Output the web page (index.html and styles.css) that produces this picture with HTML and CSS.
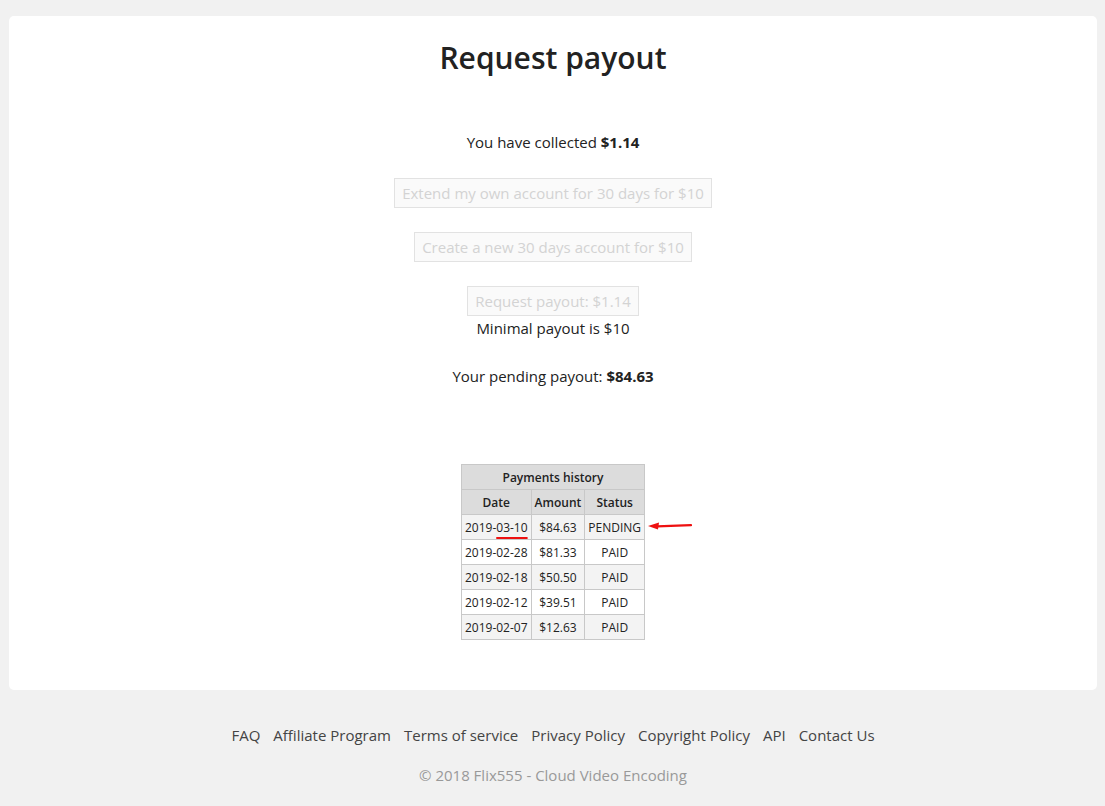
FILE: index.html
```html
<!DOCTYPE html>
<html>
<head>
    <meta name="viewport" content="width=device-width, initial-scale=1">
    <title>Request payout</title>
    <link rel="stylesheet" href="styles.css">
</head>
<body>
    <div class="payout-container">
        <h1>Request payout</h1>

        <p class="collected">You have collected <b>$1.14</b></p>

        <div class="actions">
            <button class="action-btn" disabled>Extend my own account for 30 days for $10</button>
            <button class="action-btn" disabled>Create a new 30 days account for $10</button>
            <div class="payout-box">
                <button class="action-btn" disabled>Request payout: $1.14</button>
                <div class="payout-note">Minimal payout is $10</div>
            </div>
        </div>

        <p class="pending">Your pending payout: <b>$84.63</b></p>

        <div class="history-wrap">
            <table class="history">
                <thead>
                    <tr><th colspan="3">Payments history</th></tr>
                    <tr><th>Date</th><th>Amount</th><th>Status</th></tr>
                </thead>
                <tbody>
                    <tr class="current">
                        <td><span class="date-mark">2019-<u>03-10</u></span></td>
                        <td>$84.63</td>
                        <td class="status">PENDING
                            <svg class="arrow" width="46" height="10" viewBox="0 0 46 10">
                                <path d="M44 4.2 L10 5.4" stroke="#e11" stroke-width="2.2" stroke-linecap="round"/>
                                <path d="M1 5 L12 1.5 L11 8.5 Z" fill="#e11"/>
                            </svg>
                        </td>
                    </tr>
                    <tr><td>2019-02-28</td><td>$81.33</td><td class="status">PAID</td></tr>
                    <tr><td>2019-02-18</td><td>$50.50</td><td class="status">PAID</td></tr>
                    <tr><td>2019-02-12</td><td>$39.51</td><td class="status">PAID</td></tr>
                    <tr><td>2019-02-07</td><td>$12.63</td><td class="status">PAID</td></tr>
                </tbody>
            </table>
        </div>
    </div>

    <footer class="site-footer">
        <nav class="footer-links">
            <a href="#">FAQ</a>
            <a href="#">Affiliate Program</a>
            <a href="#">Terms of service</a>
            <a href="#">Privacy Policy</a>
            <a href="#">Copyright Policy</a>
            <a href="#">API</a>
            <a href="#">Contact Us</a>
        </nav>
        <div class="copyright">&copy; 2018 Flix555 - Cloud Video Encoding</div>
    </footer>
</body>
</html>
```

FILE: styles.css
```css
body {
    margin: 0;
    padding: 16px 8px 0 9px;
    background-color: #f1f1f1;
    font-family: "Open Sans", "Noto Sans", sans-serif;
    font-size: 15px;
    color: #222;
}

.payout-container {
    background: #fff;
    border-radius: 5px;
    height: 674px;
    box-sizing: border-box;
    padding-top: 22px;
    text-align: center;
}

h1 {
    margin: 0;
    font-size: 30px;
    font-weight: 600;
    line-height: 40px;
    color: #222;
}

.collected {
    margin: 52px 0 0;
    line-height: 24px;
}

.actions {
    display: flex;
    flex-direction: column;
    align-items: center;
    gap: 24px;
    margin-top: 24px;
}

.action-btn {
    font-family: inherit;
    font-size: 15px;
    height: 30px;
    padding: 0 7px;
    background: #fafafa;
    border: 1px solid #e2e2e2;
    color: #d3d3d3;
}

.payout-box {
    display: flex;
    flex-direction: column;
    align-items: center;
}

.payout-note {
    line-height: 24px;
}

.pending {
    margin: 24px 0 0;
    line-height: 24px;
}

.history-wrap {
    margin-top: 76px;
    display: flex;
    justify-content: center;
}

.history {
    border-collapse: collapse;
    font-size: 12px;
    color: #222;
}

.history th {
    background: #dcdcdc;
    border: 1px solid #c8c8c8;
    height: 24px;
    padding: 0 3px;
    font-weight: 600;
}

.history td {
    border: 1px solid #c8c8c8;
    height: 24px;
    padding: 0 3px;
}

.history tbody tr:nth-child(odd) {
    background: #f3f3f3;
}

.history td.status {
    position: relative;
}

.date-mark u {
    text-decoration-color: #e11;
    text-decoration-thickness: 2px;
    text-underline-offset: 5px;
}

.arrow {
    position: absolute;
    left: 62px;
    top: 6px;
}

.site-footer {
    text-align: center;
    padding-top: 34px;
}

.footer-links {
    display: flex;
    justify-content: center;
    gap: 13px;
}

.footer-links a {
    color: #444;
    text-decoration: none;
    font-size: 15px;
    line-height: 22px;
}

.copyright {
    margin-top: 18px;
    color: #999;
    font-size: 15px;
    line-height: 22px;
}
```
